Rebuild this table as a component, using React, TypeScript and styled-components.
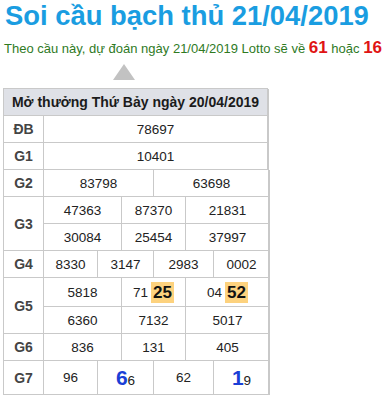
import styled, { createGlobalStyle } from "styled-components";

const GlobalStyle = createGlobalStyle`
  body {
    margin: 0;
    background: #fff;
    font-family: "Liberation Sans", Arial, sans-serif;
  }
`;

const Container = styled.div`
  padding: 0 3px;
  width: 386px;
`;

const Title = styled.h1`
  margin: 0 0 0 2px;
  color: #1a9de1;
  font-size: 27.4px;
  line-height: 31px;
  font-weight: bold;
  white-space: nowrap;
`;

const Subtitle = styled.p`
  margin: 7px 0 0 1px;
  color: #2f7a1f;
  font-size: 13px;
  line-height: 20px;
  white-space: nowrap;
`;

const Hot = styled.b`
  color: #e01414;
  font-size: 17px;
`;

const Arrow = styled.div`
  margin: 5px 0 0 110px;
  width: 0;
  height: 0;
  border-left: 11px solid transparent;
  border-right: 11px solid transparent;
  border-bottom: 16px solid #c2c2c2;
`;

const Table = styled.div`
  margin-top: 8px;
  width: 264px;
  border-top: 1px solid #c9c9c9;
  border-left: 1px solid #c9c9c9;
  box-shadow: 1px 1px 0 #c9c9c9;
  font-size: 13.5px;
  color: #222;
`;

const Header = styled.div`
  height: 26px;
  display: flex;
  align-items: center;
  justify-content: center;
  background: #dfe1e7;
  border-right: 1px solid #c9c9c9;
  border-bottom: 1px solid #c9c9c9;
  font-weight: bold;
  font-size: 14px;
  color: #1b1b1b;
`;

const Group = styled.div`
  display: flex;
`;

const Label = styled.div`
  width: 39px;
  flex: none;
  display: flex;
  align-items: center;
  justify-content: center;
  border-right: 1px solid #c9c9c9;
  border-bottom: 1px solid #c9c9c9;
  font-weight: bold;
  font-size: 14px;
  color: #444;
`;

const Body = styled.div`
  flex: 1;
  display: flex;
  flex-direction: column;
`;

const SubRow = styled.div<{ $cols: string; $h?: number }>`
  display: grid;
  grid-template-columns: ${(p) => p.$cols};
  height: ${(p) => p.$h ?? 27}px;
`;

const Cell = styled.div`
  display: flex;
  align-items: center;
  justify-content: center;
  border-right: 1px solid #c9c9c9;
  border-bottom: 1px solid #c9c9c9;
`;

const Mark = styled.b`
  margin-left: 3px;
  padding: 0 2px;
  line-height: 21px;
  background: #fdd27e;
  color: #111;
  font-size: 17px;
`;

const Big = styled.b`
  color: #1b3fd6;
  font-size: 21px;
  line-height: 21px;
`;

const Small = styled.span`
  margin-top: 6px;
`;

const ONE = "1fr";
const TWO = "110px 116px";
const THREE = "78px 64px 84px";
const FOUR = "54px 56px 60px 56px";

type Row = { label: string; cols: string; lines: React.ReactNode[][]; h?: number[] };

const rows: Row[] = [
  { label: "ĐB", cols: ONE, lines: [["78697"]] },
  { label: "G1", cols: ONE, lines: [["10401"]] },
  { label: "G2", cols: TWO, lines: [["83798", "63698"]] },
  {
    label: "G3",
    cols: THREE,
    lines: [
      ["47363", "87370", "21831"],
      ["30084", "25454", "37997"],
    ],
  },
  { label: "G4", cols: FOUR, lines: [["8330", "3147", "2983", "0002"]] },
  {
    label: "G5",
    cols: THREE,
    h: [29, 27],
    lines: [
      [
        "5818",
        <>
          71<Mark>25</Mark>
        </>,
        <>
          04<Mark>52</Mark>
        </>,
      ],
      ["6360", "7132", "5017"],
    ],
  },
  { label: "G6", cols: THREE, lines: [["836", "131", "405"]] },
  {
    label: "G7",
    cols: FOUR,
    h: [34],
    lines: [
      [
        "96",
        <>
          <Big>6</Big>
          <Small>6</Small>
        </>,
        "62",
        <>
          <Big>1</Big>
          <Small>9</Small>
        </>,
      ],
    ],
  },
];

export default function App() {
  return (
    <Container>
      <GlobalStyle />
      <Title>Soi cầu bạch thủ 21/04/2019</Title>
      <Subtitle>
        Theo cầu này, dự đoán ngày 21/04/2019 Lotto sẽ về <Hot>61</Hot> hoặc{" "}
        <Hot>16</Hot>
      </Subtitle>
      <Arrow />
      <Table>
        <Header>Mở thưởng Thứ Bảy ngày 20/04/2019</Header>
        {rows.map((row) => (
          <Group key={row.label}>
            <Label>{row.label}</Label>
            <Body>
              {row.lines.map((line, i) => (
                <SubRow key={i} $cols={row.cols} $h={row.h?.[i]}>
                  {line.map((v, j) => (
                    <Cell key={j}>{v}</Cell>
                  ))}
                </SubRow>
              ))}
            </Body>
          </Group>
        ))}
      </Table>
    </Container>
  );
}
